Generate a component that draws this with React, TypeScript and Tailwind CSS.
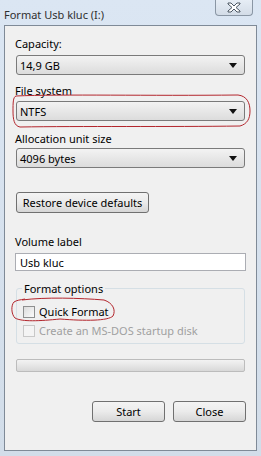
const font = { fontFamily: '"Noto Sans", "Liberation Sans", sans-serif' }

function Select({ value }: { value: string }) {
    return (
        <div className="mx-[11px] h-[20px] border border-[#7a7a7a] rounded-[3px] bg-gradient-to-b from-[#f3f3f3] to-[#dcdcdc] flex items-center justify-between pl-[3px] pr-[7px]">
            <span className="text-[11px] leading-[15px] text-black">{value}</span>
            <svg width="8" height="5" viewBox="0 0 8 5"><path d="M0 0H8L4 5Z" fill="#111"/></svg>
        </div>
    )
}

function Btn({ label, className }: { label: string, className: string }) {
    return (
        <div className={"h-[21px] border border-[#707070] rounded-[3px] bg-gradient-to-b from-[#f4f4f4] via-[#ebebeb] to-[#d6d6d6] flex items-center justify-center text-[11px] leading-[15px] text-black " + className}>
            {label}
        </div>
    )
}

function Check({ label, disabled }: { label: string, disabled?: boolean }) {
    return (
        <div className="flex items-center gap-[4px] ml-[6px]">
            <div className={"w-[12px] h-[12px] border " + (disabled ? "border-[#c8c8c8] bg-[#f4f4f4]" : "border-[#8e8f8f] bg-gradient-to-br from-[#dcdcdc] to-[#fbfbfb]")}/>
            <span className={"text-[11px] leading-[15px] " + (disabled ? "text-[#a0a0a0]" : "text-black")}>{label}</span>
        </div>
    )
}

export default function App() {
    return (
        <div className="relative w-[261px] h-[456px] bg-gradient-to-b from-[#dbe6f3] to-[#d2dde9] overflow-hidden" style={font}>
            <div className="h-[25px] flex items-start justify-between">
                <span className="mt-[7px] ml-[4px] text-[11px] leading-[15px] text-[#2f2f2f]">Format Usb kluc (I:)</span>
                <div className="w-[38px] h-[16px] mr-[8px] border border-t-0 border-[#8a96a4] rounded-b-[4px] bg-gradient-to-b from-[#e6edf5] to-[#d3dce7] flex items-center justify-center">
                    <svg width="14" height="11" viewBox="0 0 14 11">
                        <path d="M1 1H4L7 4L10 1H13V2L9 5.5L13 9V10H10L7 7L4 10H1V9L5 5.5L1 2Z" fill="#fff" stroke="#4a5663" strokeWidth="1"/>
                    </svg>
                </div>
            </div>
            <div className="mx-[4px] h-[426px] border border-[#7f8a97] bg-[#f0f0f0] flex flex-col">
                <span className="mt-[10px] ml-[10px] text-[11px] leading-[15px]">Capacity:</span>
                <div className="mt-[4px]"><Select value="14,9 GB"/></div>
                <span className="mt-[8px] ml-[10px] text-[11px] leading-[15px]">File system</span>
                <div className="mt-[3px]"><Select value="NTFS"/></div>
                <span className="mt-[10px] ml-[10px] text-[11px] leading-[15px]">Allocation unit size</span>
                <div className="mt-[2px]"><Select value="4096 bytes"/></div>
                <div className="mt-[24px] ml-[11px]"><Btn label="Restore device defaults" className="w-[133px]"/></div>
                <span className="mt-[21px] ml-[10px] text-[11px] leading-[15px]">Volume label</span>
                <div className="mt-[4px] mx-[10px] h-[18px] border border-[#abadb3] bg-white flex items-center pl-[4px] text-[11px] leading-[15px]">Usb kluc</div>
                <div className="relative mt-[17px] mx-[11px] h-[56px] border border-[#d5dfe5] rounded-[3px] flex flex-col pt-[15px] gap-[4px]">
                    <span className="absolute left-[5px] -top-[8px] px-[2px] bg-[#f0f0f0] text-[11px] leading-[15px]">Format options</span>
                    <Check label="Quick Format"/>
                    <Check label="Create an MS-DOS startup disk" disabled/>
                </div>
                <div className="mt-[15px] mx-[11px] h-[13px] border border-[#bcbcbc] rounded-[2px] bg-gradient-to-b from-[#f3f3f3] via-[#e6e6e6] to-[#d8d8d8]"/>
                <div className="mt-[29px] flex justify-end gap-[8px] mr-[10px]">
                    <Btn label="Start" className="w-[73px]"/>
                    <Btn label="Close" className="w-[73px]"/>
                </div>
            </div>
            <svg className="absolute inset-0 pointer-events-none" width="261" height="456" viewBox="0 0 261 456" fill="none">
                <path d="M16 96C60 94 150 96 238 95C247 96 250 103 250 111C250 119 247 124 240 126C170 127 80 126 20 127C14 126 13 119 13 111C13 103 13 97 16 96Z" stroke="#b3262d" strokeWidth="1"/>
                <path d="M22 300C45 297 80 298 104 300C113 303 116 310 113 316C108 321 85 321 60 319C40 321 22 322 15 318C11 314 11 305 14 302C17 300 20 300 25 299" stroke="#b3262d" strokeWidth="1"/>
            </svg>
        </div>
    )
}
